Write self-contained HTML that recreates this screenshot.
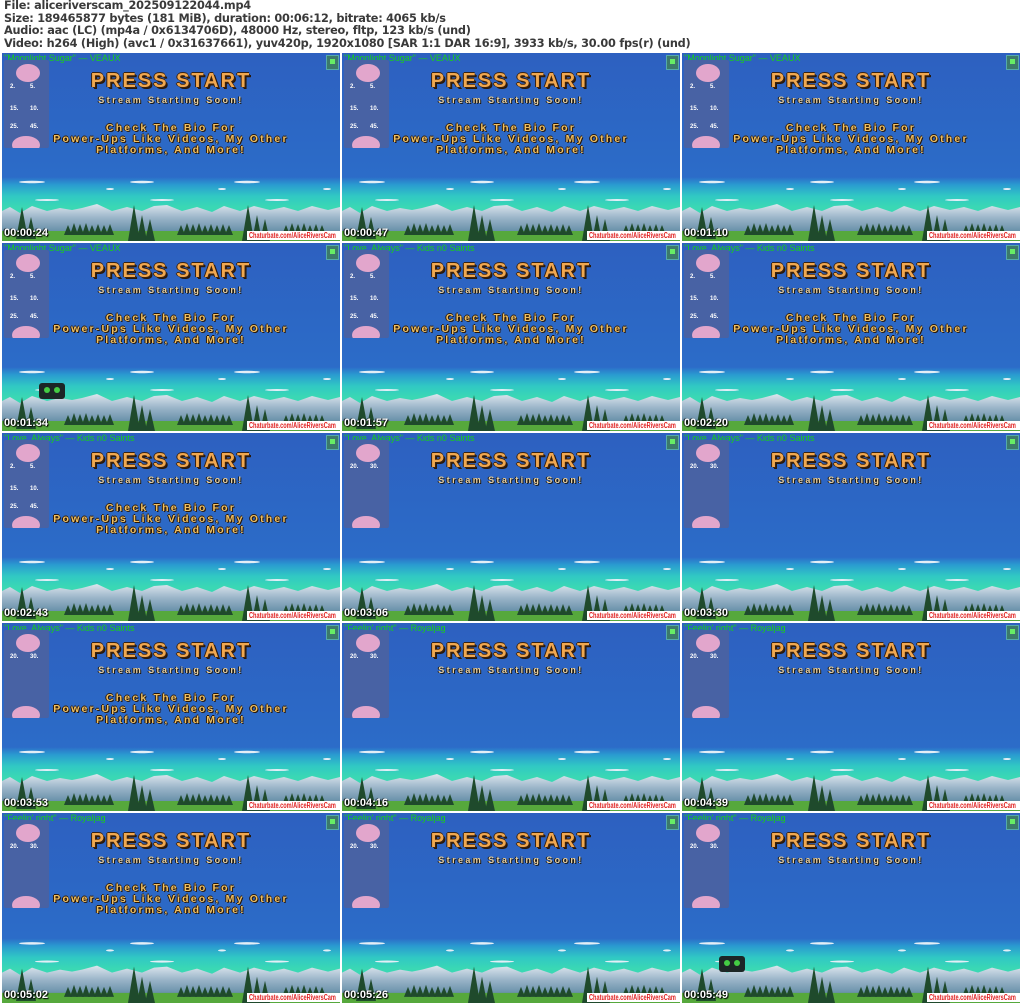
<!DOCTYPE html>
<html><head><meta charset="utf-8">
<style>
html,body{margin:0;padding:0;background:#fff;width:1024px;height:1003px;overflow:hidden}
.hdr{position:absolute;left:4px;top:0;font:bold 11.3px/12.6px "DejaVu Sans",sans-serif;color:#3a3a3a;white-space:pre;letter-spacing:-0.25px}
.t{position:absolute;width:338px;height:188px;overflow:hidden;background:#2d62c2}
.t svg.bg{position:absolute;left:0;top:0}
.song{position:absolute;left:2px;top:0px;font:9px/10px "Liberation Sans",sans-serif;color:#19d019;white-space:nowrap}
.pn{position:absolute;left:2px;top:7px;width:45px;height:88px;background:#4862a4;border-radius:2px;overflow:hidden}
.pn i{position:absolute;border-radius:50%;background:#e2a6cc}
.pn b{position:absolute;font:bold 6px "Liberation Sans",sans-serif;color:#fff}
.ic{position:absolute;left:324px;top:2px;width:11px;height:13px;background:#3c7a6a;border:1px solid #5aa;}
.ic:after{content:"";position:absolute;left:3px;top:3px;width:5px;height:5px;background:#6e6}
.ps{position:absolute;left:0;width:338px;text-align:center;top:16px;font:bold 20px/24px "Liberation Sans",sans-serif;letter-spacing:2px;color:#f0a850;text-shadow:1px 1px 0 #3a2210,-1px 0 0 #3a2210,0 -1px 0 #3a2210,2px 2px 0 #2a1808}
.ss{position:absolute;left:0;width:338px;text-align:center;top:42px;font:bold 9px/11px "Liberation Sans",sans-serif;letter-spacing:2.4px;color:#e8d0a0;text-shadow:1px 1px 0 #1a1a1a,-1px 0 0 #1a1a1a}
.ck{position:absolute;left:0;width:338px;text-align:center;top:70px;font:bold 10.5px/10.8px "Liberation Sans",sans-serif;letter-spacing:2.2px;color:#f0c060;text-shadow:1px 1px 0 #2a1808,-1px 0 0 #2a1808,0 -1px 0 #2a1808}
.ts{position:absolute;left:2px;top:174px;font:bold 11px/12px "Liberation Sans",sans-serif;color:#fff;text-shadow:1px 1px 1px #000,-1px 0 1px #000}
.cb{position:absolute;left:245px;top:178px;width:93px;height:9px;background:#fff;overflow:hidden}
.cb span{position:absolute;left:2px;top:0;font:bold 8px/9px "Liberation Sans",sans-serif;color:#e02020;white-space:nowrap;transform:scaleX(0.7);transform-origin:0 0}
.cat{position:absolute;width:26px;height:16px;background:#1c2626;border-radius:3px}
.cat:before,.cat:after{content:"";position:absolute;top:4px;width:6px;height:6px;border-radius:50%;background:#4c4}
.cat:before{left:5px}.cat:after{left:15px}
</style></head><body>
<div class="hdr">File: aliceriverscam_202509122044.mp4
Size: 189465877 bytes (181 MiB), duration: 00:06:12, bitrate: 4065 kb/s
Audio: aac (LC) (mp4a / 0x6134706D), 48000 Hz, stereo, fltp, 123 kb/s (und)
Video: h264 (High) (avc1 / 0x31637661), yuv420p, 1920x1080 [SAR 1:1 DAR 16:9], 3933 kb/s, 30.00 fps(r) (und)</div>

<svg width="0" height="0" style="position:absolute">
<defs>
<linearGradient id="sky" x1="0" y1="0" x2="0" y2="1">
<stop offset="0" stop-color="#2d60c0"/><stop offset="0.66" stop-color="#2c6cc8"/>
<stop offset="0.70" stop-color="#2a9ad0"/><stop offset="0.76" stop-color="#30c8c4"/><stop offset="0.82" stop-color="#3ad8b4"/>
</linearGradient>
<linearGradient id="mt" x1="0" y1="0" x2="0" y2="1">
<stop offset="0" stop-color="#dde6ee"/><stop offset="0.45" stop-color="#9ab4c8"/><stop offset="1" stop-color="#5a86a0"/>
</linearGradient>
<symbol id="scene" viewBox="0 0 338 188">
<rect width="338" height="188" fill="url(#sky)"/>
<g fill="#e4eef6">
<ellipse cx="30" cy="129" rx="13" ry="1.2"/><ellipse cx="140" cy="129" rx="12" ry="1.2"/><ellipse cx="245" cy="129" rx="13" ry="1.2"/>
<ellipse cx="108" cy="136" rx="4" ry="1"/><ellipse cx="220" cy="136" rx="4" ry="1"/><ellipse cx="325" cy="136" rx="4" ry="1"/>
<ellipse cx="45" cy="147" rx="12" ry="1"/><ellipse cx="160" cy="147" rx="12" ry="1"/><ellipse cx="275" cy="147" rx="12" ry="1"/>
</g>
<polygon fill="url(#mt)" points="0,158 8,154 18,160 30,153 45,158 58,155 70,157 80,155 95,151 110,158 125,154 140,158 152,153 165,152 180,158 195,154 210,159 222,153 238,158 252,153 268,157 282,154 296,158 310,153 326,157 338,154 338,182 0,182"/>
<rect y="178" width="338" height="10" fill="#56a83c"/>
<g fill="#1f4a2c">
<polygon points="14,186 20,154 26,186"/><polygon points="24,186 29,164 34,186"/>
<polygon points="62,182 66,172 70,182"/><polygon points="68,182 72,170 76,182"/><polygon points="74,182 78,171 82,182"/><polygon points="80,182 84,170 88,182"/><polygon points="86,182 90,172 94,182"/><polygon points="92,182 96,171 100,182"/><polygon points="98,182 102,172 106,182"/><polygon points="104,182 108,171 112,182"/>
<polygon points="126,188 132,152 138,188"/><polygon points="135,188 140,162 145,188"/><polygon points="143,188 148,166 153,188"/>
<polygon points="175,182 179,172 183,182"/><polygon points="181,182 185,170 189,182"/><polygon points="187,182 191,171 195,182"/><polygon points="193,182 197,170 201,182"/><polygon points="199,182 203,172 207,182"/><polygon points="205,182 209,171 213,182"/><polygon points="211,182 215,172 219,182"/><polygon points="217,182 221,171 225,182"/><polygon points="223,182 227,172 231,182"/>
<polygon points="240,188 246,152 252,188"/><polygon points="250,188 255,162 260,188"/><polygon points="258,188 263,166 268,188"/>
<polygon points="280,182 284,172 288,182"/><polygon points="286,182 290,170 294,182"/><polygon points="292,182 296,171 300,182"/><polygon points="298,182 302,170 306,182"/><polygon points="304,182 308,172 312,182"/><polygon points="310,182 314,171 318,182"/><polygon points="316,182 320,172 324,182"/>
</g>
</symbol>
</defs></svg>

<!-- Row 1 -->
<div class="t" style="left:2px;top:53px"><svg class="bg" width="338" height="188"><use href="#scene"/></svg>
<div class="song">"Moonlight Sugar" — VEAUX</div>
<div class="pn"><i style="left:12px;top:4px;width:24px;height:18px"></i><i style="left:8px;top:76px;width:28px;height:18px"></i><b style="left:6px;top:24px">2.</b><b style="left:26px;top:24px">5.</b><b style="left:6px;top:46px">15.</b><b style="left:26px;top:46px">10.</b><b style="left:6px;top:64px">25.</b><b style="left:26px;top:64px">45.</b></div>
<div class="ic"></div>
<div class="ps">PRESS START</div><div class="ss">Stream Starting Soon!</div>
<div class="ck">Check The Bio For<br>Power-Ups Like Videos, My Other<br>Platforms, And More!</div>
<div class="ts">00:00:24</div><div class="cb"><span>Chaturbate.com/AliceRiversCam</span></div></div>

<div class="t" style="left:342px;top:53px"><svg class="bg" width="338" height="188"><use href="#scene"/></svg>
<div class="song">"Moonlight Sugar" — VEAUX</div>
<div class="pn"><i style="left:12px;top:4px;width:24px;height:18px"></i><i style="left:8px;top:76px;width:28px;height:18px"></i><b style="left:6px;top:24px">2.</b><b style="left:26px;top:24px">5.</b><b style="left:6px;top:46px">15.</b><b style="left:26px;top:46px">10.</b><b style="left:6px;top:64px">25.</b><b style="left:26px;top:64px">45.</b></div>
<div class="ic"></div>
<div class="ps">PRESS START</div><div class="ss">Stream Starting Soon!</div>
<div class="ck">Check The Bio For<br>Power-Ups Like Videos, My Other<br>Platforms, And More!</div>
<div class="ts">00:00:47</div><div class="cb"><span>Chaturbate.com/AliceRiversCam</span></div></div>

<div class="t" style="left:682px;top:53px"><svg class="bg" width="338" height="188"><use href="#scene"/></svg>
<div class="song">"Moonlight Sugar" — VEAUX</div>
<div class="pn"><i style="left:12px;top:4px;width:24px;height:18px"></i><i style="left:8px;top:76px;width:28px;height:18px"></i><b style="left:6px;top:24px">2.</b><b style="left:26px;top:24px">5.</b><b style="left:6px;top:46px">15.</b><b style="left:26px;top:46px">10.</b><b style="left:6px;top:64px">25.</b><b style="left:26px;top:64px">45.</b></div>
<div class="ic"></div>
<div class="ps">PRESS START</div><div class="ss">Stream Starting Soon!</div>
<div class="ck">Check The Bio For<br>Power-Ups Like Videos, My Other<br>Platforms, And More!</div>
<div class="ts">00:01:10</div><div class="cb"><span>Chaturbate.com/AliceRiversCam</span></div></div>

<!-- Row 2 -->
<div class="t" style="left:2px;top:243px"><svg class="bg" width="338" height="188"><use href="#scene"/></svg>
<div class="song">"Moonlight Sugar" — VEAUX</div>
<div class="pn"><i style="left:12px;top:4px;width:24px;height:18px"></i><i style="left:8px;top:76px;width:28px;height:18px"></i><b style="left:6px;top:24px">2.</b><b style="left:26px;top:24px">5.</b><b style="left:6px;top:46px">15.</b><b style="left:26px;top:46px">10.</b><b style="left:6px;top:64px">25.</b><b style="left:26px;top:64px">45.</b></div>
<div class="ic"></div>
<div class="ps">PRESS START</div><div class="ss">Stream Starting Soon!</div>
<div class="ck">Check The Bio For<br>Power-Ups Like Videos, My Other<br>Platforms, And More!</div>
<div class="cat" style="left:37px;top:140px"></div>
<div class="ts">00:01:34</div><div class="cb"><span>Chaturbate.com/AliceRiversCam</span></div></div>

<div class="t" style="left:342px;top:243px"><svg class="bg" width="338" height="188"><use href="#scene"/></svg>
<div class="song">"Love, Always" — Kids n0 Saints</div>
<div class="pn"><i style="left:12px;top:4px;width:24px;height:18px"></i><i style="left:8px;top:76px;width:28px;height:18px"></i><b style="left:6px;top:24px">2.</b><b style="left:26px;top:24px">5.</b><b style="left:6px;top:46px">15.</b><b style="left:26px;top:46px">10.</b><b style="left:6px;top:64px">25.</b><b style="left:26px;top:64px">45.</b></div>
<div class="ic"></div>
<div class="ps">PRESS START</div><div class="ss">Stream Starting Soon!</div>
<div class="ck">Check The Bio For<br>Power-Ups Like Videos, My Other<br>Platforms, And More!</div>
<div class="ts">00:01:57</div><div class="cb"><span>Chaturbate.com/AliceRiversCam</span></div></div>

<div class="t" style="left:682px;top:243px"><svg class="bg" width="338" height="188"><use href="#scene"/></svg>
<div class="song">"Love, Always" — Kids n0 Saints</div>
<div class="pn"><i style="left:12px;top:4px;width:24px;height:18px"></i><i style="left:8px;top:76px;width:28px;height:18px"></i><b style="left:6px;top:24px">2.</b><b style="left:26px;top:24px">5.</b><b style="left:6px;top:46px">15.</b><b style="left:26px;top:46px">10.</b><b style="left:6px;top:64px">25.</b><b style="left:26px;top:64px">45.</b></div>
<div class="ic"></div>
<div class="ps">PRESS START</div><div class="ss">Stream Starting Soon!</div>
<div class="ck">Check The Bio For<br>Power-Ups Like Videos, My Other<br>Platforms, And More!</div>
<div class="ts">00:02:20</div><div class="cb"><span>Chaturbate.com/AliceRiversCam</span></div></div>

<!-- Row 3 -->
<div class="t" style="left:2px;top:433px"><svg class="bg" width="338" height="188"><use href="#scene"/></svg>
<div class="song">"Love, Always" — Kids n0 Saints</div>
<div class="pn"><i style="left:12px;top:4px;width:24px;height:18px"></i><i style="left:8px;top:76px;width:28px;height:18px"></i><b style="left:6px;top:24px">2.</b><b style="left:26px;top:24px">5.</b><b style="left:6px;top:46px">15.</b><b style="left:26px;top:46px">10.</b><b style="left:6px;top:64px">25.</b><b style="left:26px;top:64px">45.</b></div>
<div class="ic"></div>
<div class="ps">PRESS START</div><div class="ss">Stream Starting Soon!</div>
<div class="ck">Check The Bio For<br>Power-Ups Like Videos, My Other<br>Platforms, And More!</div>
<div class="ts">00:02:43</div><div class="cb"><span>Chaturbate.com/AliceRiversCam</span></div></div>

<div class="t" style="left:342px;top:433px"><svg class="bg" width="338" height="188"><use href="#scene"/></svg>
<div class="song">"Love, Always" — Kids n0 Saints</div>
<div class="pn"><i style="left:12px;top:4px;width:24px;height:18px"></i><i style="left:8px;top:76px;width:28px;height:18px"></i><b style="left:6px;top:24px">20.</b><b style="left:26px;top:24px">30.</b></div>
<div class="ic"></div>
<div class="ps">PRESS START</div><div class="ss">Stream Starting Soon!</div>
<div class="ts">00:03:06</div><div class="cb"><span>Chaturbate.com/AliceRiversCam</span></div></div>

<div class="t" style="left:682px;top:433px"><svg class="bg" width="338" height="188"><use href="#scene"/></svg>
<div class="song">"Love, Always" — Kids n0 Saints</div>
<div class="pn"><i style="left:12px;top:4px;width:24px;height:18px"></i><i style="left:8px;top:76px;width:28px;height:18px"></i><b style="left:6px;top:24px">20.</b><b style="left:26px;top:24px">30.</b></div>
<div class="ic"></div>
<div class="ps">PRESS START</div><div class="ss">Stream Starting Soon!</div>
<div class="ts">00:03:30</div><div class="cb"><span>Chaturbate.com/AliceRiversCam</span></div></div>

<!-- Row 4 -->
<div class="t" style="left:2px;top:623px"><svg class="bg" width="338" height="188"><use href="#scene"/></svg>
<div class="song">"Love, Always" — Kids n0 Saints</div>
<div class="pn"><i style="left:12px;top:4px;width:24px;height:18px"></i><i style="left:8px;top:76px;width:28px;height:18px"></i><b style="left:6px;top:24px">20.</b><b style="left:26px;top:24px">30.</b></div>
<div class="ic"></div>
<div class="ps">PRESS START</div><div class="ss">Stream Starting Soon!</div>
<div class="ck">Check The Bio For<br>Power-Ups Like Videos, My Other<br>Platforms, And More!</div>
<div class="ts">00:03:53</div><div class="cb"><span>Chaturbate.com/AliceRiversCam</span></div></div>

<div class="t" style="left:342px;top:623px"><svg class="bg" width="338" height="188"><use href="#scene"/></svg>
<div class="song">"Feelin' right" — Royaljag</div>
<div class="pn"><i style="left:12px;top:4px;width:24px;height:18px"></i><i style="left:8px;top:76px;width:28px;height:18px"></i><b style="left:6px;top:24px">20.</b><b style="left:26px;top:24px">30.</b></div>
<div class="ic"></div>
<div class="ps">PRESS START</div><div class="ss">Stream Starting Soon!</div>
<div class="ts">00:04:16</div><div class="cb"><span>Chaturbate.com/AliceRiversCam</span></div></div>

<div class="t" style="left:682px;top:623px"><svg class="bg" width="338" height="188"><use href="#scene"/></svg>
<div class="song">"Feelin' right" — Royaljag</div>
<div class="pn"><i style="left:12px;top:4px;width:24px;height:18px"></i><i style="left:8px;top:76px;width:28px;height:18px"></i><b style="left:6px;top:24px">20.</b><b style="left:26px;top:24px">30.</b></div>
<div class="ic"></div>
<div class="ps">PRESS START</div><div class="ss">Stream Starting Soon!</div>
<div class="ts">00:04:39</div><div class="cb"><span>Chaturbate.com/AliceRiversCam</span></div></div>

<!-- Row 5 -->
<div class="t" style="left:2px;top:813px;height:190px"><svg class="bg" width="338" height="190" viewBox="0 0 338 188" preserveAspectRatio="none"><use href="#scene"/></svg>
<div class="song">"Feelin' right" — Royaljag</div>
<div class="pn"><i style="left:12px;top:4px;width:24px;height:18px"></i><i style="left:8px;top:76px;width:28px;height:18px"></i><b style="left:6px;top:24px">20.</b><b style="left:26px;top:24px">30.</b></div>
<div class="ic"></div>
<div class="ps">PRESS START</div><div class="ss">Stream Starting Soon!</div>
<div class="ck">Check The Bio For<br>Power-Ups Like Videos, My Other<br>Platforms, And More!</div>
<div class="ts" style="top:176px">00:05:02</div><div class="cb" style="top:180px"><span>Chaturbate.com/AliceRiversCam</span></div></div>

<div class="t" style="left:342px;top:813px;height:190px"><svg class="bg" width="338" height="190" viewBox="0 0 338 188" preserveAspectRatio="none"><use href="#scene"/></svg>
<div class="song">"Feelin' right" — Royaljag</div>
<div class="pn"><i style="left:12px;top:4px;width:24px;height:18px"></i><i style="left:8px;top:76px;width:28px;height:18px"></i><b style="left:6px;top:24px">20.</b><b style="left:26px;top:24px">30.</b></div>
<div class="ic"></div>
<div class="ps">PRESS START</div><div class="ss">Stream Starting Soon!</div>
<div class="ts" style="top:176px">00:05:26</div><div class="cb" style="top:180px"><span>Chaturbate.com/AliceRiversCam</span></div></div>

<div class="t" style="left:682px;top:813px;height:190px"><svg class="bg" width="338" height="190" viewBox="0 0 338 188" preserveAspectRatio="none"><use href="#scene"/></svg>
<div class="song">"Feelin' right" — Royaljag</div>
<div class="pn"><i style="left:12px;top:4px;width:24px;height:18px"></i><i style="left:8px;top:76px;width:28px;height:18px"></i><b style="left:6px;top:24px">20.</b><b style="left:26px;top:24px">30.</b></div>
<div class="ic"></div>
<div class="ps">PRESS START</div><div class="ss">Stream Starting Soon!</div>
<div class="cat" style="left:37px;top:143px"></div>
<div class="ts" style="top:176px">00:05:49</div><div class="cb" style="top:180px"><span>Chaturbate.com/AliceRiversCam</span></div></div>

</body></html>
